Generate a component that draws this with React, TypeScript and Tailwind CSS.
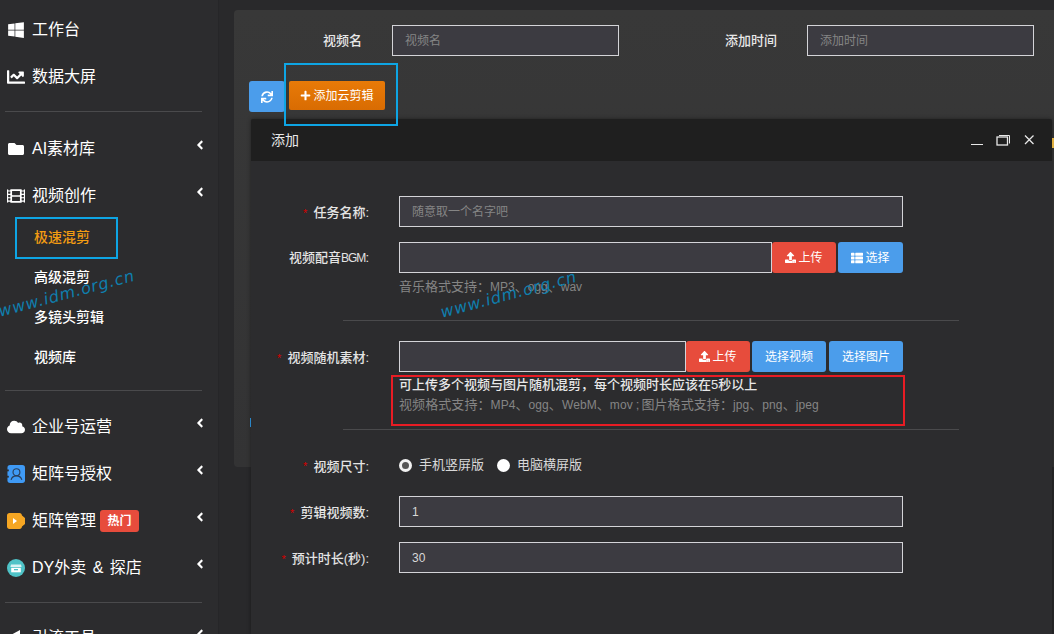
import React from "react";
import { FaWindows, FaChartLine, FaFolder, FaFilm, FaCloud, FaAngleLeft, FaSync, FaPlus, FaUpload, FaThList } from "react-icons/fa";

function NavItem({ icon, label, badge, arrow = true }: { icon: React.ReactNode; label: string; badge?: boolean; arrow?: boolean }) {
  return (
    <div className="flex h-[47px] items-center pl-[7px] pr-[11px] pt-[2px] text-[16px] text-white [word-spacing:2px]">
      <span className="mr-[7px] flex h-[18px] w-[18px] shrink-0 items-center justify-center">{icon}</span>
      <span className="leading-none">{label}</span>
      {badge && (
        <span className="ml-[4px] flex h-[22px] w-[39px] items-center justify-center rounded-[3px] bg-[#e74c3c] text-[12px] font-bold text-white">热门</span>
      )}
      {arrow && <FaAngleLeft className="mb-[7px] ml-auto text-[14px] text-white" />}
    </div>
  );
}

function SubItem({ label, active }: { label: string; active?: boolean }) {
  return (
    <div className={`flex h-[40px] items-center pb-[2px] pl-[34px] text-[14px] font-medium ${active ? "text-[#f39c12]" : "text-white"}`}>{label}</div>
  );
}

function Divider({ className = "" }: { className?: string }) {
  return <div className={`mx-[5px] h-px w-[197px] bg-[#4a4a4c] ${className}`} />;
}

function Label({ children, required = true }: { children: React.ReactNode; required?: boolean }) {
  return (
    <div className={`flex w-[118px] shrink-0 items-center justify-end text-[13px] font-medium text-[#e4e4e4] ${required ? "pt-[3px]" : ""}`}>
      {required && <span className="mr-[6px] text-[11px] text-[#d40000]">*</span>}
      <span>{children}</span>
    </div>
  );
}

function Field({ value, placeholder, className = "" }: { value?: string; placeholder?: string; className?: string }) {
  return (
    <div className={`flex h-[31px] items-center border border-[#d4d4d8] bg-[#3c3b41] pl-[12px] text-[12px] ${value ? "text-[#d8d8d8]" : "text-[#858585]"} ${className}`}>
      {value ?? placeholder ?? ""}
    </div>
  );
}

function Btn({ children, color, className = "" }: { children: React.ReactNode; color: "red" | "blue"; className?: string }) {
  return (
    <div className={`flex h-[31px] items-center justify-center gap-[2px] rounded-[3px] text-[12px] text-white ${color === "red" ? "bg-[#e74c3c]" : "bg-[#4b9deb]"} ${className}`}>
      {children}
    </div>
  );
}

function Latin({ children }: { children: React.ReactNode }) {
  return <span className="text-[12px]">{children}</span>;
}

function Sidebar() {
  return (
    <aside className="h-full w-[219px] shrink-0 overflow-hidden border-r border-[#262628] bg-[#2c2c2e] pt-[5px]">
      <NavItem icon={<FaWindows className="text-[18px]" />} label="工作台" arrow={false} />
      <NavItem icon={<FaChartLine className="text-[20px]" />} label="数据大屏" arrow={false} />
      <Divider className="my-[12px]" />
      <NavItem icon={<FaFolder className="text-[16px]" />} label="AI素材库" />
      <NavItem icon={<FaFilm className="text-[18px]" />} label="视频创作" />
      <SubItem label="极速混剪" active />
      <SubItem label="高级混剪" />
      <SubItem label="多镜头剪辑" />
      <SubItem label="视频库" />
      <Divider className="mb-[11px] mt-[12px]" />
      <NavItem icon={<FaCloud className="text-[18px]" />} label="企业号运营" />
      <NavItem
        icon={
          <svg viewBox="0 0 20 20" className="h-[20px] w-[20px]">
            <rect x="0.5" y="0" width="19.5" height="20" rx="3" fill="#3f9af5" />
            <rect x="0" y="5" width="2" height="2" fill="#2c2c2e" />
            <rect x="0" y="12" width="2" height="2" fill="#2c2c2e" />
            <circle cx="10.5" cy="8" r="3.8" fill="none" stroke="#2a3f5c" strokeWidth="1.3" />
            <path d="M4.5 16.5c.8-3 3-4.5 6-4.5s5.2 1.5 6 4.5" fill="none" stroke="#2a3f5c" strokeWidth="1.3" />
          </svg>
        }
        label="矩阵号授权"
      />
      <NavItem
        icon={
          <svg viewBox="0 0 18 16" className="h-[16px] w-[18px]">
            <path d="M2.5 0h10c1.5 0 2.300 1 2.500 2.500L18 5v6l-3 2.500c-.2 1.500-1 2.500-2.500 2.500h-10C1 16 0 15 0 13.500v-11C0 1 1 0 2.500 0z" fill="#f5a623" />
            <path d="M6 5l4 3-4 3z" fill="#fff" />
          </svg>
        }
        label="矩阵管理"
        badge
      />
      <NavItem
        icon={
          <svg viewBox="0 0 18 18" className="h-[18px] w-[18px]">
            <circle cx="9" cy="9" r="9" fill="#4fc3c7" />
            <path d="M4 5.500h10l.6 2.500H3.400z" fill="#d8f3f4" />
            <rect x="4.200" y="8.800" width="9.600" height="4.500" fill="#fff" />
            <rect x="7" y="10" width="4" height="1.300" fill="#4fc3c7" />
          </svg>
        }
        label="DY外卖 & 探店"
      />
      <Divider className="mb-[10px] mt-[12px]" />
      <NavItem
        icon={
          <svg viewBox="0 0 18 16" className="h-[16px] w-[18px]">
            <path d="M2 6l11-6v14L2 9z" fill="#fff" />
          </svg>
        }
        label="引流工具"
      />
    </aside>
  );
}

function Modal() {
  return (
    <div className="absolute left-[251px] top-[119px] h-[515px] w-[801px] overflow-hidden rounded-t-[2px] bg-[#2c2c2e] shadow-[0_0_4px_rgba(0,0,0,0.4)]">
      <div className="flex h-[42px] items-center bg-[#1f1f1f] pl-[20px] pr-[16px]">
        <span className="text-[14px] text-[#e8e8e8]">添加</span>
        <div className="ml-auto flex items-center gap-[12px]">
          <svg viewBox="0 0 14 14" className="h-[14px] w-[14px]"><path d="M1 11.5h12" stroke="#e8e8e8" strokeWidth="1" /></svg>
          <svg viewBox="0 0 14 14" className="h-[14px] w-[14px]">
            <rect x="1" y="4" width="10.500" height="8" fill="none" stroke="#e8e8e8" strokeWidth="1.300" />
            <path d="M3 2.500h10.500v8" fill="none" stroke="#e8e8e8" strokeWidth="1" />
          </svg>
          <svg viewBox="0 0 14 14" className="h-[14px] w-[14px]"><path d="M3 2.500l8.500 8.500M11.500 2.500l-8.500 8.500" stroke="#e8e8e8" strokeWidth="1.300" /></svg>
        </div>
      </div>
      <div className="pt-[35px]">
        <div className="flex h-[31px] gap-[30px]">
          <Label>任务名称:</Label>
          <Field placeholder="随意取一个名字吧" className="w-[504px]" />
        </div>
        <div className="mt-[15px] flex h-[31px] gap-[30px]">
          <Label required={false}>视频配音<span className="text-[12px] tracking-[-1px]">BGM</span>:</Label>
          <div className="flex w-[504px]">
            <Field className="w-[373px]" />
            <Btn color="red" className="w-[64px]"><FaUpload className="text-[11px]" />上传</Btn>
            <Btn color="blue" className="ml-[2px] w-[65px]"><FaThList className="text-[12px]" />选择</Btn>
          </div>
        </div>
        <div className="ml-[148px] mt-[5px] text-[13px] leading-[18px] text-[#858585]">音乐格式支持：<Latin>MP3</Latin>、<Latin>ogg</Latin>、<Latin>wav</Latin></div>
        <div className="ml-[92px] mt-[24px] h-px w-[616px] bg-[#4a4a4c]" />
        <div className="mt-[20px] flex h-[31px] gap-[30px]">
          <Label>视频随机素材:</Label>
          <div className="flex w-[504px]">
            <Field className="w-[287px]" />
            <Btn color="red" className="w-[64px]"><FaUpload className="text-[11px]" />上传</Btn>
            <Btn color="blue" className="ml-[2px] w-[74px]">选择视频</Btn>
            <Btn color="blue" className="ml-[3px] w-[74px]">选择图片</Btn>
          </div>
        </div>
        <div className="ml-[148px] mt-[4px] text-[13px] font-medium leading-[18px] text-[#e8e8e8]">可上传多个视频与图片随机混剪，每个视频时长应该在5秒以上</div>
        <div className="ml-[148px] mt-[2px] text-[13px] leading-[18px] tracking-[0.08px] text-[#858585]">视频格式支持：<Latin>MP4</Latin>、<Latin>ogg</Latin>、<Latin>WebM</Latin>、<Latin>mov</Latin><span className="ml-[3px] mr-[2px]">;</span>图片格式支持：<Latin>jpg</Latin>、<Latin>png</Latin>、<Latin>jpeg</Latin></div>
        <div className="ml-[92px] mt-[15px] h-px w-[616px] bg-[#4a4a4c]" />
        <div className="mt-[25px] flex h-[20px] gap-[30px]">
          <Label>视频尺寸:</Label>
          <div className="flex items-center text-[13px] text-[#d8d8d8]">
            <span className="h-[13px] w-[13px] rounded-full border-[3px] border-[#f2f2f2] bg-[#555]" />
            <span className="ml-[7px]">手机竖屏版</span>
            <span className="ml-[13px] h-[13px] w-[13px] rounded-full bg-white" />
            <span className="ml-[7px]">电脑横屏版</span>
          </div>
        </div>
        <div className="mt-[21px] flex h-[31px] gap-[30px]">
          <Label>剪辑视频数:</Label>
          <Field value="1" className="w-[504px]" />
        </div>
        <div className="mt-[15px] flex h-[31px] gap-[30px]">
          <Label>预计时长(秒):</Label>
          <Field value="30" className="w-[504px]" />
        </div>
      </div>
      <div className="absolute left-[140px] top-[256px] h-[51px] w-[514px] border-2 border-[#e81c24]" />
    </div>
  );
}

function Main() {
  return (
    <main className="h-full flex-1 overflow-hidden bg-[#29292b] pl-[15px] pt-[10px]">
      <div className="h-[457px] rounded-l-[4px] bg-gradient-to-b from-[#383838] to-[#333334]">
        <div className="flex items-center pt-[15px]">
          <div className="flex w-[128px] justify-end text-[13px] font-medium text-[#e8e8e8]">视频名</div>
          <div className="ml-[30px] flex h-[31px] w-[227px] items-center border border-[#d4d4d8] bg-[#3c3b41] pl-[12px] text-[12px] text-[#858585]">视频名</div>
          <div className="ml-[106px] w-[52px] text-[13px] font-medium text-[#e8e8e8]">添加时间</div>
          <div className="ml-[30px] flex h-[31px] w-[227px] items-center border border-[#d4d4d8] bg-[#3c3b41] pl-[12px] text-[12px] text-[#858585]">添加时间</div>
        </div>
        <div className="ml-[15px] mt-[25px] flex">
          <div className="flex h-[31px] w-[36px] items-center justify-center rounded-[3px] bg-[#4b9deb] text-white"><FaSync className="text-[12px]" /></div>
          <div className="ml-[4px] flex h-[29px] w-[96px] items-center justify-center gap-[2px] rounded-[2px] bg-gradient-to-b from-[#e87a08] to-[#d96c02] text-[12px] text-white"><FaPlus className="text-[11px]" />添加云剪辑</div>
        </div>
      </div>
    </main>
  );
}

export default function App() {
  return (
    <div className="relative flex h-[634px] w-[1054px] overflow-hidden bg-[#29292b] [font-family:'Liberation_Sans','Noto_Sans_CJK_SC',sans-serif]">
      <Sidebar />
      <Main />
      <Modal />
      <div className="pointer-events-none absolute left-[250px] top-[418px] h-[9px] w-px bg-[#2a86c8]" />
      <div className="pointer-events-none absolute left-[1052px] top-[138px] h-[10px] w-[2px] bg-[#e0b040]" />
      <div className="pointer-events-none absolute left-[284px] top-[63px] h-[63px] w-[114px] border-2 border-[#0ea5e4]" />
      <div className="pointer-events-none absolute left-[15px] top-[217px] h-[42px] w-[103px] border-2 border-[#0ea5e4]" />
      <div className="pointer-events-none absolute left-[-1px] top-[304px] origin-left -rotate-[15deg] text-[16px] italic leading-none tracking-[0.8px] text-[#0f7fae] [font-family:'DejaVu_Sans',sans-serif]">www.idm.org.cn</div>
      <div className="pointer-events-none absolute left-[441px] top-[305px] origin-left -rotate-[15deg] text-[16px] italic leading-none tracking-[0.8px] text-[#0f7fae] [font-family:'DejaVu_Sans',sans-serif]">www.idm.org.cn</div>
    </div>
  );
}
